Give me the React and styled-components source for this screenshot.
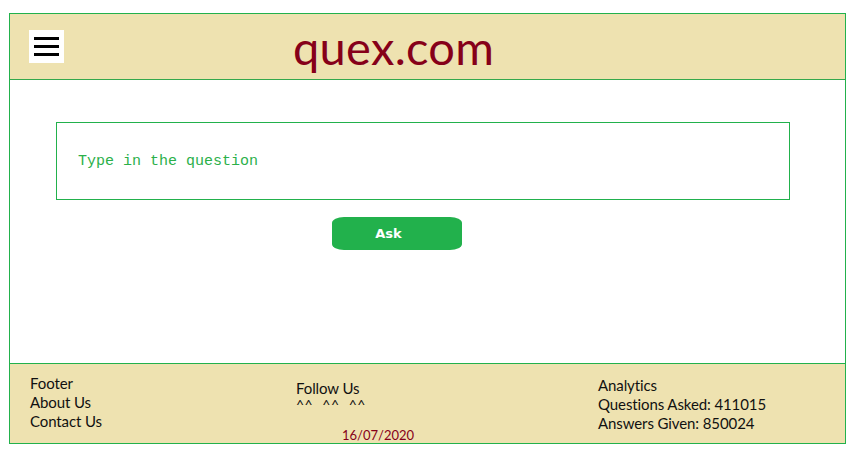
import React from "react";
import styled, { createGlobalStyle } from "styled-components";

const GlobalStyle = createGlobalStyle`
  body {
    margin: 0;
    background: #ffffff;
    font-family: "Lato", "Open Sans", sans-serif;
  }
`;

const green = "#22b14c";
const sand = "#eee2b0";
const maroon = "#860019";

const Wrapper = styled.div`
  margin: 13px 14px 0 9px;
  border: 1px solid ${green};
  display: flex;
  flex-direction: column;
`;

// --------- Header --------
const Header = styled.header`
  display: flex;
  align-items: center;
  height: 65px;
  background: ${sand};
  border-bottom: 1px solid #35a84c;
`;

const Burger = styled.button`
  width: 35px;
  height: 33px;
  margin-left: 19px;
  padding: 0 5px;
  border: none;
  background: #ffffff;
  display: flex;
  flex-direction: column;
  justify-content: center;
  gap: 5px;
`;

const Bar = styled.span`
  display: block;
  height: 3px;
  background: #000000;
`;

const Title = styled.h1`
  margin: 0 0 0 229px;
  font-family: "Lato", sans-serif;
  font-weight: 400;
  font-size: 47px;
  letter-spacing: 0.3px;
  color: ${maroon};
  line-height: 1;
  padding-top: 2px;
`;

// --------- Main --------
const Main = styled.main`
  height: 283px;
  display: flex;
  flex-direction: column;
  align-items: flex-start;
`;

const Question = styled.input`
  box-sizing: border-box;
  margin: 42px 0 0 46px;
  width: 734px;
  height: 78px;
  padding: 0 0 0 21px;
  border: 1px solid ${green};
  outline: none;
  font-family: "Liberation Mono", monospace;
  font-size: 15px;

  &::placeholder {
    color: #2bb04a;
  }
`;

const AskButton = styled.button`
  margin: 17px 0 0 322px;
  width: 130px;
  height: 33px;
  border: none;
  border-radius: 12px / 6px;
  background: ${green};
  color: #ffffff;
  font-family: "DejaVu Sans", sans-serif;
  font-weight: 700;
  font-size: 13px;
  padding: 0 17px 1px 0;
`;

// --------- Footer --------
const Footer = styled.footer`
  display: grid;
  grid-template-columns: 266px 302px 1fr;
  height: 79px;
  padding-left: 20px;
  background: ${sand};
  border-top: 1px solid ${green};
  color: #111111;
  font-size: 15px;
  line-height: 19px;
`;

const Column = styled.div`
  display: flex;
  flex-direction: column;
  padding-top: ${(p) => p.$top}px;
`;

const Line = styled.span`
  white-space: nowrap;
  letter-spacing: -0.1px;
`;

const Faces = styled.span`
  font-size: 14px;
  line-height: 14px;
  letter-spacing: 0.5px;
  word-spacing: 5px;
`;

const DateStamp = styled.span`
  margin: 14px 0 0 46px;
  font-size: 13px;
  color: ${maroon};
`;

export default function App() {
  return (
    <>
      <GlobalStyle />
      <Wrapper>
        <Header>
          <Burger aria-label="menu">
            <Bar />
            <Bar />
            <Bar />
          </Burger>
          <Title>quex.com</Title>
        </Header>

        <Main>
          <Question placeholder="Type in the question" />
          <AskButton>Ask</AskButton>
        </Main>

        <Footer>
          <Column $top={10}>
            <Line>Footer</Line>
            <Line>About Us</Line>
            <Line>Contact Us</Line>
          </Column>
          <Column $top={15}>
            <Line>Follow Us</Line>
            <Faces>^^ ^^ ^^</Faces>
            <DateStamp>16/07/2020</DateStamp>
          </Column>
          <Column $top={12}>
            <Line>Analytics</Line>
            <Line>Questions Asked: 411015</Line>
            <Line>Answers Given: 850024</Line>
          </Column>
        </Footer>
      </Wrapper>
    </>
  );
}
